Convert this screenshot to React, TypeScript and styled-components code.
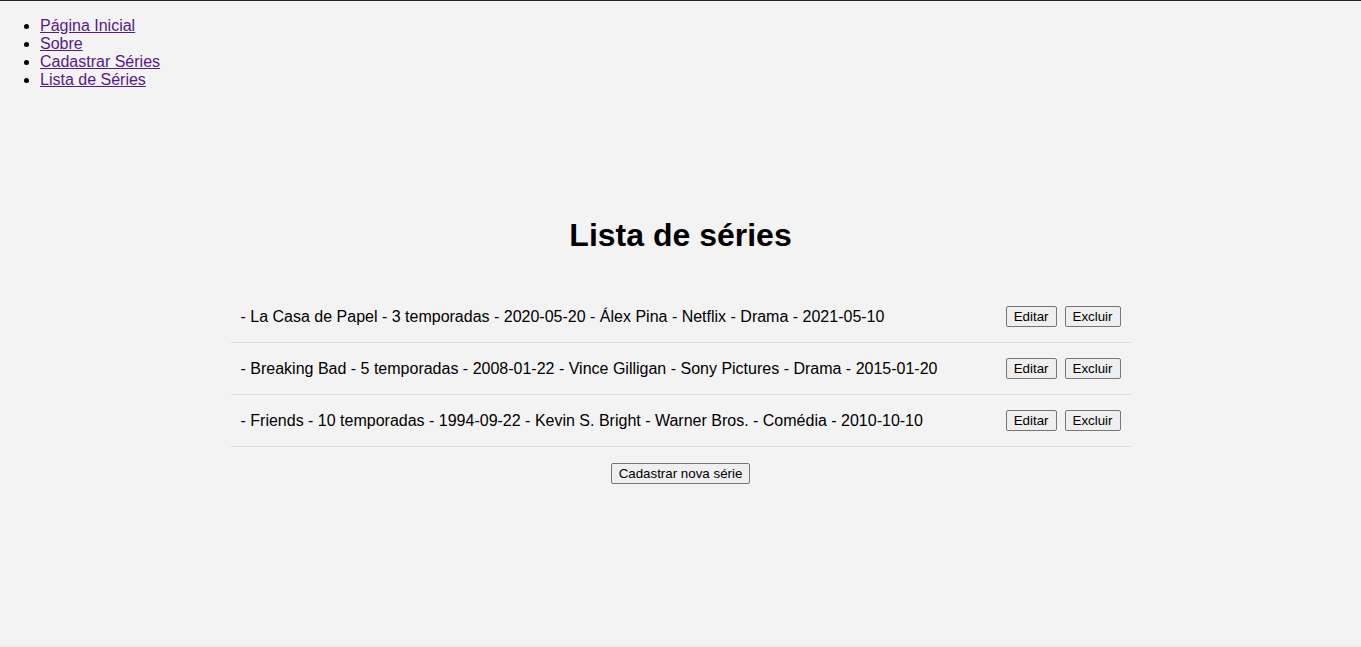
import styled, { createGlobalStyle } from "styled-components";

const GlobalStyle = createGlobalStyle`
  body {
    margin: 0;
    font-family: "Liberation Sans", Arial, sans-serif;
    background: #f3f3f3;
    color: #000;
  }
`;

type Serie = {
  id: number;
  titulo: string;
  temporadas: number;
  lancamento: string;
  diretor: string;
  produtora: string;
  categoria: string;
  assistido: string;
};

const series: Serie[] = [
  {
    id: 1,
    titulo: "La Casa de Papel",
    temporadas: 3,
    lancamento: "2020-05-20",
    diretor: "Álex Pina",
    produtora: "Netflix",
    categoria: "Drama",
    assistido: "2021-05-10",
  },
  {
    id: 2,
    titulo: "Breaking Bad",
    temporadas: 5,
    lancamento: "2008-01-22",
    diretor: "Vince Gilligan",
    produtora: "Sony Pictures",
    categoria: "Drama",
    assistido: "2015-01-20",
  },
  {
    id: 3,
    titulo: "Friends",
    temporadas: 10,
    lancamento: "1994-09-22",
    diretor: "Kevin S. Bright",
    produtora: "Warner Bros.",
    categoria: "Comédia",
    assistido: "2010-10-10",
  },
];

export default function App() {
  return (
    <Page>
      <GlobalStyle />
      <Nav>
        <li><a href="#">Página Inicial</a></li>
        <li><a href="#">Sobre</a></li>
        <li><a href="#">Cadastrar Séries</a></li>
        <li><a href="#">Lista de Séries</a></li>
      </Nav>
      <Main>
        <Title>Lista de séries</Title>
        <List>
          {series.map((s) => (
            <Row key={s.id}>
              <span>
                - {s.titulo} - {s.temporadas} temporadas - {s.lancamento} -{" "}
                {s.diretor} - {s.produtora} - {s.categoria} - {s.assistido}
              </span>
              <Actions>
                <Button>Editar</Button>
                <Button>Excluir</Button>
              </Actions>
            </Row>
          ))}
        </List>
        <Footer>
          <Button>Cadastrar nova série</Button>
        </Footer>
      </Main>
    </Page>
  );
}

const Page = styled.div`
  min-height: 100vh;
  box-sizing: border-box;
  border-top: 1px solid #222;
  border-bottom: 1px solid #e6e6e6;
  overflow: hidden;
`;

const Nav = styled.ul`
  margin: 16px 0;
  padding-left: 40px;
  font-size: 16px;
  line-height: 18px;
  a {
    color: #551a8b;
  }
`;

const Main = styled.main`
  width: 900px;
  margin: 128px auto 0;
`;

const Title = styled.h1`
  margin: 0 0 37px;
  font-size: 32px;
  line-height: 37px;
  text-align: center;
`;

const List = styled.div`
  display: flex;
  flex-direction: column;
`;

const Row = styled.div`
  display: flex;
  align-items: center;
  justify-content: space-between;
  padding: 15px 10px;
  border-bottom: 1px solid #ddd;
  font-size: 16px;
  line-height: 21px;
`;

const Actions = styled.div`
  display: flex;
  gap: 8px;
`;

const Button = styled.button`
  font-family: "Liberation Sans", Arial, sans-serif;
  font-size: 13.333px;
  line-height: 15px;
  padding: 1px 7px;
  height: 21px;
  background: #efefef;
  color: #000;
  border: 1px solid #767676;
  border-radius: 2px;
`;

const Footer = styled.div`
  display: flex;
  justify-content: center;
  margin-top: 16px;
`;
